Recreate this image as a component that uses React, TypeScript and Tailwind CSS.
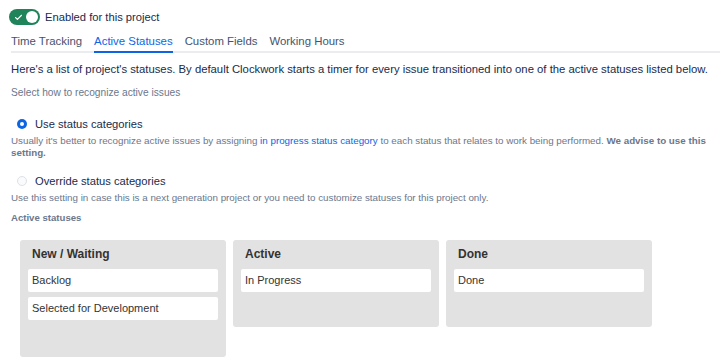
import { Check } from "lucide-react"

const columns = [
  { title: "New / Waiting", items: ["Backlog", "Selected for Development"], tall: true },
  { title: "Active", items: ["In Progress"], tall: false },
  { title: "Done", items: ["Done"], tall: false },
]

const tabs = ["Time Tracking", "Active Statuses", "Custom Fields", "Working Hours"]

export default function App() {
  return (
    <div
      className="w-[721px] h-[363px] bg-white overflow-hidden text-[#172b4d]"
      style={{ fontFamily: "'Liberation Sans', Arial, sans-serif" }}
    >
      {/* toggle */}
      <div className="flex items-center pt-[9px] pl-[9px] h-[25px]">
        <div className="w-[31px] h-[16px] rounded-full bg-[#1f845a] flex items-center justify-between px-[2px]">
          <Check className="w-[9px] h-[9px] text-white ml-[3px]" strokeWidth={3} />
          <div className="w-[12px] h-[12px] rounded-full bg-white" />
        </div>
        <span className="ml-[5px] text-[11.2px]">Enabled for this project</span>
      </div>

      {/* tabs */}
      <div className="mt-[8px] ml-[11px] mr-[1px] flex gap-[12px] border-b-2 border-[#ebecf0] text-[11.4px]">
        {tabs.map((t) => (
          <div
            key={t}
            className={
              t === "Active Statuses"
                ? "h-[20px] -mb-[2px] border-b-2 border-[#0c66e4] text-[#0c66e4] leading-[16px]"
                : "h-[18px] text-[#44546f] leading-[16px]"
            }
          >
            {t}
          </div>
        ))}
      </div>

      <div className="pl-[11px]">
        <p className="mt-[9px] text-[11.3px] leading-[14px]">
          Here's a list of project's statuses. By default Clockwork starts a timer for every issue transitioned into one of the active statuses listed below.
        </p>
        <p className="mt-[11px] text-[10.2px] leading-[12px] text-[#6b778c]">Select how to recognize active issues</p>

        <div className="mt-[18px] flex items-center pl-[6px] h-[14px]">
          <div className="w-[10px] h-[10px] rounded-full bg-[#0c66e4] flex items-center justify-center">
            <div className="w-[4px] h-[4px] rounded-full bg-white" />
          </div>
          <span className="ml-[8px] text-[11.2px]">Use status categories</span>
        </div>
        <p className="mt-[4px] text-[9.8px] leading-[12px] text-[#6b778c] pr-[10px]">
          <span>Usually it's better to recognize active issues by assigning </span>
          <span className="text-[#0c66e4]">in progress status category</span>
          <span> to each status that relates to work being performed. </span>
          <span className="font-bold">We advise to use this</span>{" "}
          <span className="font-bold">setting.</span>
        </p>

        <div className="mt-[15px] flex items-center pl-[6px] h-[14px]">
          <div className="w-[10px] h-[10px] rounded-full border border-[#dfe1e6] bg-[#fafbfc]" />
          <span className="ml-[8px] text-[11.2px]">Override status categories</span>
        </div>
        <p className="mt-[4px] text-[9.8px] leading-[12px] text-[#6b778c]">
          Use this setting in case this is a next generation project or you need to customize statuses for this project only.
        </p>
        <p className="mt-[8px] text-[9.6px] leading-[12px] font-bold text-[#6b778c]">Active statuses</p>

        <div className="mt-[16px] ml-[9px] flex items-start gap-[7px]">
          {columns.map((c) => (
            <div
              key={c.title}
              className={
                "w-[206px] bg-[#e2e2e2] rounded-[3px] px-[8px] pt-[7px] " + (c.tall ? "h-[117px]" : "h-[87px]")
              }
            >
              <div className="text-[12px] leading-[14px] font-bold text-[#333] h-[22px] pl-[4px]">{c.title}</div>
              <div className="flex flex-col gap-[5px]">
                {c.items.map((i) => (
                  <div key={i} className="bg-white rounded-[2px] h-[23px] flex items-center px-[4px] text-[11px] text-[#333]">
                    {i}
                  </div>
                ))}
              </div>
            </div>
          ))}
        </div>
      </div>
    </div>
  )
}
